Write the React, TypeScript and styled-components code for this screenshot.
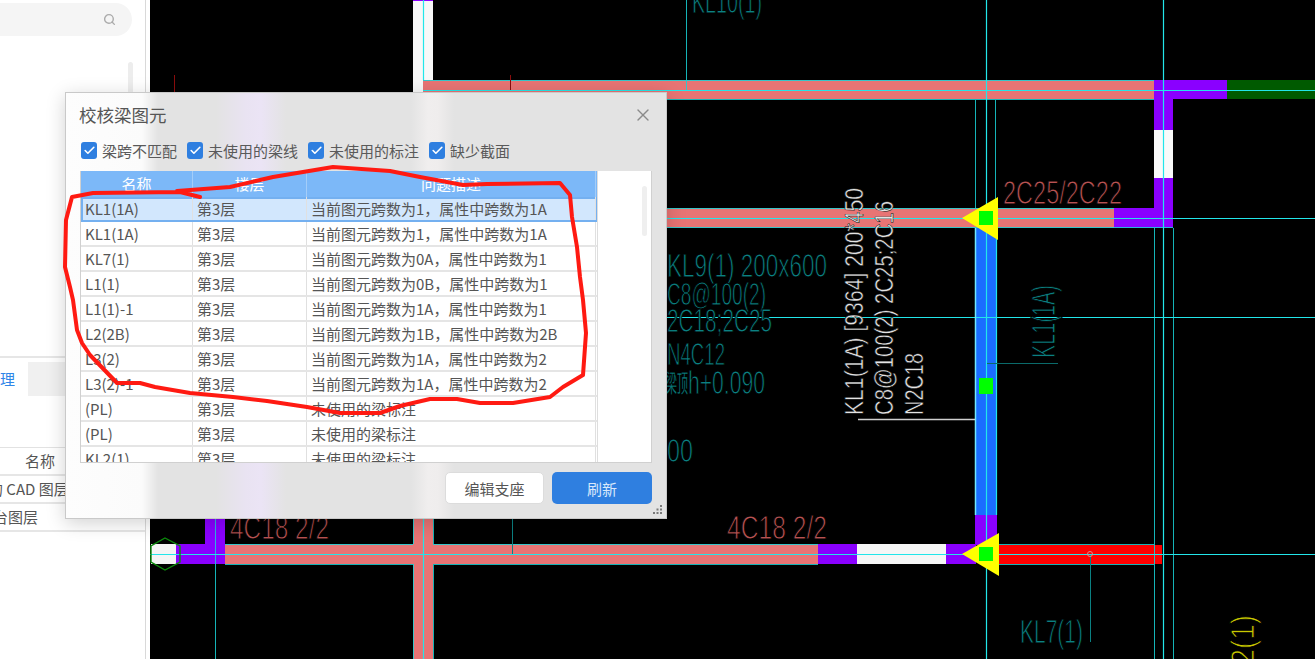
import React from "react";
import styled, { createGlobalStyle } from "styled-components";
import { Search, X, Check } from "lucide-react";

const FONT = `"Noto Sans CJK SC", "Noto Sans", sans-serif`;

const GlobalStyle = createGlobalStyle`
  html, body { margin: 0; padding: 0; background: #fff; }
  body { font-family: ${FONT}; }
`;

interface Row {
  name: string;
  floor: string;
  issue: string;
}

const rows: Row[] = [
  { name: "KL1(1A)", floor: "第3层", issue: "当前图元跨数为1，属性中跨数为1A" },
  { name: "KL1(1A)", floor: "第3层", issue: "当前图元跨数为1，属性中跨数为1A" },
  { name: "KL7(1)", floor: "第3层", issue: "当前图元跨数为0A，属性中跨数为1" },
  { name: "L1(1)", floor: "第3层", issue: "当前图元跨数为0B，属性中跨数为1" },
  { name: "L1(1)-1", floor: "第3层", issue: "当前图元跨数为1A，属性中跨数为1" },
  { name: "L2(2B)", floor: "第3层", issue: "当前图元跨数为1B，属性中跨数为2B" },
  { name: "L3(2)", floor: "第3层", issue: "当前图元跨数为1A，属性中跨数为2" },
  { name: "L3(2)-1", floor: "第3层", issue: "当前图元跨数为1A，属性中跨数为2" },
  { name: "(PL)", floor: "第3层", issue: "未使用的梁标注" },
  { name: "(PL)", floor: "第3层", issue: "未使用的梁标注" },
  { name: "KL2(1)", floor: "第3层", issue: "未使用的梁标注" },
];

const filters = ["梁跨不匹配", "未使用的梁线", "未使用的标注", "缺少截面"];

const scribble =
  "M200 197 L180 192 L93 193 L72 197 L66 220 L65 267 L70 287 L73 300 L77 330 L82 343 L90 355 L117 383 L140 383 L155 387 L190 393 L233 397 L267 401 L307 407 L340 413 L380 413 L400 406 L430 399 L457 399 L480 403 L513 403 L550 397 L563 387 L583 375 L586 333 L583 300 L580 277 L577 247 L572 217 L570 195 L560 183 L487 184 L463 185 L420 177 L390 171 L333 167 L273 177 L230 187 L177 191";

const PINK = "#e87474";
const PURPLE = "#8a00ff";
const CYAN = "#19d4d8";
const TEAL = "#0b8082";
const BRICK = "#b85252";

const CadDrawing = () => (
  <CadSvg viewBox="150 0 1165 659">
    {/* columns and beams */}
    <rect x={413} y={0} width={20} height={100} fill="#f8f8f8" />
    <rect x={413} y={0} width={20} height={1} fill={PURPLE} />
    <rect x={423} y={80} width={731} height={19} fill={PINK} />
    <rect x={1154} y={80} width={73} height={19} fill={PURPLE} />
    <rect x={1227} y={80} width={88} height={19} fill="#005a00" />
    <rect x={1154} y={99} width={19} height={31} fill={PURPLE} />
    <rect x={1154} y={130} width={19} height={48} fill="#fafafa" />
    <rect x={1154} y={178} width={19} height={30} fill={PURPLE} />
    <rect x={1114} y={208} width={59} height={20} fill={PURPLE} />
    <rect x={600} y={208} width={514} height={20} fill={PINK} />
    <rect x={975} y={228} width={22} height={287} fill="#1a6dff" />
    <rect x={975} y={515} width={22} height={30} fill={PURPLE} />
    <rect x={205} y={510} width={20} height={35} fill={PURPLE} />
    <rect x={176} y={544} width={49} height={20} fill={PURPLE} />
    <rect x={151} y={544} width={25} height={20} fill="#f4f4f4" />
    <rect x={225} y={544} width={593} height={20} fill={PINK} />
    <rect x={413} y={510} width={20} height={149} fill={PINK} />
    <rect x={818} y={544} width={39} height={20} fill={PURPLE} />
    <rect x={857} y={544} width={89} height={20} fill="#f6f6f6" />
    <rect x={946} y={544} width={30} height={20} fill={PURPLE} />
    <rect x={998} y={545} width={164} height={19} fill="#ff0000" />

    {/* outlines and axes */}
    <g stroke={CYAN} strokeWidth={1} fill="none" opacity={0.85}>
      <path d="M423 80.5H1154M423 99.5H1154M600 208.5H1114M600 227.5H1173" />
      <path d="M225 544.5H413M433 544.5H818M225 564.5H413M433 564.5H818" />
      <path d="M998 544.5H1154M998 564.5H1154" />
      <path d="M975.5 99V208M995.5 99V208" />
      <path d="M413.5 510V544M433.5 510V544M413.5 564V659M433.5 564V659" />
      <path d="M1154.5 228V659M1173.5 228V659" />
      <path d="M215.5 510V659M686.5 0V90" />
    </g>
    <g stroke="#22e6ea" strokeWidth={1.2} fill="none">
      <path d="M423 90.5H1315M600 218.5H1315M600 317.5H1315M150 554.5H1315" />
      <path d="M986.5 0V659M1163.5 0V659M423.5 0V80M423.5 510V659" />
      <path d="M996.5 228V515" />
    </g>
    <path d="M975.5 228V515" stroke="#6fe8ff" strokeWidth={1.5} />
    <path d="M987 363.5H1058" stroke="#0a6a6a" strokeWidth={1} />
    <path d="M858 419.5H975" stroke="#cfcfcf" strokeWidth={1.5} />
    <path d="M510.5 75V90M174.5 75V92" stroke="#8a0d0d" strokeWidth={1} />
    <path d="M512.5 510V554M1090.5 555V642" stroke={TEAL} strokeWidth={1} />
    <circle cx={1090} cy={554} r={2.5} fill="none" stroke="#e08a8a" strokeWidth={1} />
    <polygon
      points="165,538 180,546 180,562 165,570 151,562 151,546"
      fill="none"
      stroke="#0c8a0c"
      strokeWidth={1.4}
    />

    {/* supports */}
    <polygon points="962,218 998,197 998,240" fill="#ffff00" />
    <polygon points="962,554 999,533 999,576" fill="#ffff00" />
    <rect x={979} y={211} width={14} height={14} fill="#00ff00" />
    <rect x={979} y={378} width={14} height={16} fill="#00ff00" />
    <rect x={979} y={547} width={14} height={14} fill="#00ff00" />

    {/* annotations */}
    <CadText x={692} y={13} fontSize={33} fill={TEAL} textLength={70} lengthAdjust="spacingAndGlyphs">KL10(1)</CadText>
    <CadText x={667} y={277} fontSize={33} fill={TEAL} textLength={160} lengthAdjust="spacingAndGlyphs">KL9(1) 200x600</CadText>
    <CadText x={667} y={305} fontSize={31} fill={TEAL} textLength={99} lengthAdjust="spacingAndGlyphs">C8@100(2)</CadText>
    <CadText x={667} y={332} fontSize={33} fill={TEAL} textLength={105} lengthAdjust="spacingAndGlyphs">2C18;2C25</CadText>
    <CadText x={667} y={365} fontSize={32} fill={TEAL} textLength={58} lengthAdjust="spacingAndGlyphs">N4C12</CadText>
    <CadText x={666} y={392} fontSize={24} fill={TEAL} textLength={22} lengthAdjust="spacingAndGlyphs" $thin={0.3}>梁顶</CadText>
    <CadText x={688} y={394} fontSize={33} fill={TEAL} textLength={77} lengthAdjust="spacingAndGlyphs">h+0.090</CadText>
    <CadText x={654} y={462} fontSize={33} fill={TEAL} textLength={39} lengthAdjust="spacingAndGlyphs">400</CadText>
    <CadText x={1003} y={204} fontSize={33} fill={BRICK} textLength={119} lengthAdjust="spacingAndGlyphs">2C25/2C22</CadText>
    <CadText x={727} y={539} fontSize={33} fill={BRICK} textLength={100} lengthAdjust="spacingAndGlyphs">4C18 2/2</CadText>
    <CadText x={230} y={539} fontSize={33} fill={BRICK} textLength={99} lengthAdjust="spacingAndGlyphs">4C18 2/2</CadText>
    <CadText x={1020} y={643} fontSize={33} fill={TEAL} textLength={63} lengthAdjust="spacingAndGlyphs">KL7(1)</CadText>
    <CadText transform="translate(1055 358) rotate(-90)" fontSize={33} fill={TEAL} textLength={73} lengthAdjust="spacingAndGlyphs">KL1(1A)</CadText>
    <CadText transform="translate(863 415) rotate(-90)" fontSize={25} fill="#e4e4e4" textLength={227} lengthAdjust="spacingAndGlyphs" $thin={0.5}>KL1(1A) [9364] 200*450</CadText>
    <CadText transform="translate(893 415) rotate(-90)" fontSize={25} fill="#e4e4e4" textLength={214} lengthAdjust="spacingAndGlyphs" $thin={0.5}>C8@100(2) 2C25;2C16</CadText>
    <CadText transform="translate(923 415) rotate(-90)" fontSize={25} fill="#e4e4e4" textLength={62} lengthAdjust="spacingAndGlyphs" $thin={0.5}>N2C18</CadText>
    <CadText transform="translate(1254 680) rotate(-90)" fontSize={33} fill="#c9c900" textLength={65} lengthAdjust="spacingAndGlyphs">L2(1)</CadText>
  </CadSvg>
);

const App: React.FC = () => (
  <Page>
    <GlobalStyle />
    <Sidebar>
      <SearchPill>
        <Search size={13} strokeWidth={2.6} color="#ababab" />
      </SearchPill>
      <TreeArea>
        <TreeThumb />
      </TreeArea>
      <Tabs>
        <ActiveTab>管理</ActiveTab>
        <IdleTab />
      </Tabs>
      <LayerHeader>名称</LayerHeader>
      <LayerRow>
        <LayerName $shift={-12}>的 CAD 图层</LayerName>
      </LayerRow>
      <LayerRow>
        <LayerName $shift={-7}>台图层</LayerName>
      </LayerRow>
    </Sidebar>
    <Canvas>
      <CadDrawing />
    </Canvas>

    <Dialog>
      <TitleBar>
        <Title>校核梁图元</Title>
        <X size={20} strokeWidth={1.6} color="#8a8a8a" />
      </TitleBar>
      <Filters>
        {filters.map((label) => (
          <Filter key={label}>
            <CheckBox>
              <Check size={13} strokeWidth={3} color="#fff" />
            </CheckBox>
            {label}
          </Filter>
        ))}
      </Filters>
      <TableFrame>
        <TableColumn>
          <HeadRow>
            <HeadCell $w={112}>名称</HeadCell>
            <HeadCell $w={114}>楼层</HeadCell>
            <HeadCell $w={289}>问题描述</HeadCell>
          </HeadRow>
          {rows.map((row, i) => (
            <DataRow key={i} $selected={i === 0}>
              <DataCell $w={112}>{row.name}</DataCell>
              <DataCell $w={114}>{row.floor}</DataCell>
              <DataCell $w={289}>{row.issue}</DataCell>
            </DataRow>
          ))}
        </TableColumn>
        <ScrollRail>
          <ScrollThumb />
        </ScrollRail>
      </TableFrame>
      <Footer>
        <GhostButton>编辑支座</GhostButton>
        <PrimaryButton>刷新</PrimaryButton>
      </Footer>
      <Grip viewBox="0 0 10 10">
        <g fill="#7a7a7a">
          <rect x={7} y={0} width={2} height={2} />
          <rect x={3.5} y={3.5} width={2} height={2} />
          <rect x={7} y={3.5} width={2} height={2} />
          <rect x={0} y={7} width={2} height={2} />
          <rect x={3.5} y={7} width={2} height={2} />
          <rect x={7} y={7} width={2} height={2} />
        </g>
      </Grip>
    </Dialog>

    <Scribble viewBox="0 0 1315 659">
      <path
        d={scribble}
        fill="none"
        stroke="#ff1a12"
        strokeWidth={4}
        strokeLinejoin="round"
        strokeLinecap="round"
      />
    </Scribble>
  </Page>
);

export default App;

const Page = styled.div`
  position: relative;
  display: flex;
  width: 1315px;
  height: 659px;
  overflow: hidden;
  background: #fff;
`;

const Sidebar = styled.aside`
  width: 145px;
  margin-right: 4px;
  flex-shrink: 0;
  display: flex;
  flex-direction: column;
  border-right: 1px solid #d9d9d9;
  box-sizing: content-box;
  overflow: hidden;
  font-size: 15px;
  color: #555;
`;

const SearchPill = styled.div`
  width: 152px;
  height: 33px;
  margin: 3px 0 0 -20px;
  padding-right: 16px;
  box-sizing: border-box;
  flex-shrink: 0;
  display: flex;
  align-items: center;
  justify-content: flex-end;
  background: #f5f5f5;
  border-radius: 17px;
`;

const TreeArea = styled.div`
  height: 322px;
  flex-shrink: 0;
  padding: 26px 0 0 128px;
  box-sizing: border-box;
  border-bottom: 2px solid #e6e6e6;
`;

const TreeThumb = styled.div`
  width: 5px;
  height: 60px;
  border-radius: 3px;
  background: #ededed;
`;

const Tabs = styled.div`
  display: flex;
  height: 39px;
  padding-top: 4px;
  flex-shrink: 0;
`;

const ActiveTab = styled.div`
  width: 28px;
  height: 34px;
  margin-left: -15px;
  line-height: 34px;
  color: #2f86e8;
  white-space: nowrap;
`;

const IdleTab = styled.div`
  width: 80px;
  height: 34px;
  margin-left: 15px;
  background: #f0f0f0;
`;

const LayerHeader = styled.div`
  height: 26px;
  margin-top: 46px;
  padding-left: 25px;
  line-height: 26px;
  flex-shrink: 0;
  border-top: 1px solid #e2e2e2;
`;

const LayerRow = styled.div`
  height: 26px;
  line-height: 26px;
  flex-shrink: 0;
  border-top: 2px solid #e6e6e6;
  overflow: hidden;
  white-space: nowrap;
  &:last-child {
    border-bottom: 2px solid #e6e6e6;
  }
`;

const LayerName = styled.div<{ $shift: number }>`
  margin-left: ${(p) => p.$shift}px;
`;

const Canvas = styled.main`
  flex: 1;
  background: #000;
  overflow: hidden;
`;

const CadSvg = styled.svg`
  display: block;
  width: 100%;
  height: 100%;
`;

// a black stroke over the fill eats into the glyphs, giving the thin CAD lettering
const CadText = styled.text<{ $thin?: number }>`
  font-family: "Liberation Sans", "Noto Sans CJK SC", sans-serif;
  stroke: #000;
  stroke-width: ${(p) => p.$thin ?? 1}px;
`;

const Dialog = styled.section`
  position: absolute;
  left: 65px;
  top: 92px;
  width: 602px;
  height: 427px;
  box-sizing: border-box;
  padding: 0 14px 0 13px;
  display: flex;
  flex-direction: column;
  border: 1px solid #c9c9c9;
  box-shadow: 0 4px 18px rgba(0, 0, 0, 0.18);
  background: linear-gradient(
    90deg,
    #fdfdfd 0,
    #fbfbfb 76px,
    #e3e3e3 92px,
    #e3e3e3 150px,
    #e9e3f2 180px,
    #ebe4f5 195px,
    #e3e3e3 220px,
    #e3e3e3 345px,
    #f0eeee 362px,
    #efeded 372px,
    #e3e3e3 388px,
    #e3e3e3 100%
  );
`;

const TitleBar = styled.header`
  height: 46px;
  padding-bottom: 3px;
  margin-right: -1px;
  box-sizing: border-box;
  flex-shrink: 0;
  display: flex;
  align-items: center;
  justify-content: space-between;
`;

const Title = styled.h2`
  margin: 0;
  font-size: 17.5px;
  font-weight: 400;
  color: #565656;
`;

const Filters = styled.div`
  height: 22px;
  padding-left: 2px;
  flex-shrink: 0;
  display: flex;
  align-items: center;
  gap: 10px;
`;

const Filter = styled.label`
  display: flex;
  align-items: center;
  gap: 5px;
  font-size: 15px;
  color: #5a5a5a;
  white-space: nowrap;
`;

const CheckBox = styled.span`
  width: 16px;
  height: 17px;
  border-radius: 3px;
  background: #2f7fe0;
  display: flex;
  align-items: center;
  justify-content: center;
`;

const TableFrame = styled.div`
  height: 292px;
  margin: 10px 0 0 1px;
  flex-shrink: 0;
  display: flex;
  box-sizing: border-box;
  background: #fff;
  border: 1px solid #d0d0d0;
  border-top-width: 0;
  overflow: hidden;
`;

const TableColumn = styled.div`
  width: 516px;
  flex-shrink: 0;
  border-right: 1px solid #dedede;
`;

const HeadRow = styled.div`
  display: flex;
  height: 26px;
  background: #7cb8f8;
`;

const HeadCell = styled.div<{ $w: number }>`
  width: ${(p) => p.$w}px;
  flex-shrink: 0;
  box-sizing: border-box;
  text-align: center;
  line-height: 26px;
  font-size: 15px;
  color: #fff;
  border-right: 1px solid #a3cdf9;
`;

const DataRow = styled.div<{ $selected?: boolean }>`
  display: flex;
  height: 25px;
  box-sizing: border-box;
  background: ${(p) => (p.$selected ? "#d2e7fd" : "#fff")};
  border-bottom: 2px solid ${(p) => (p.$selected ? "#74b0f0" : "#e5e5e5")};
  box-shadow: ${(p) => (p.$selected ? "inset 0 2px 0 #74b0f0, inset 2px 0 0 #74b0f0, inset -2px 0 0 #74b0f0" : "none")};
`;

const DataCell = styled.div<{ $w: number }>`
  width: ${(p) => p.$w}px;
  flex-shrink: 0;
  box-sizing: border-box;
  padding-left: 4px;
  line-height: 23px;
  font-size: 15px;
  color: #555;
  white-space: nowrap;
  border-right: 1px solid #e0e0e0;
`;

const ScrollRail = styled.div`
  flex: 1;
  padding: 15px 0 0 44px;
`;

const ScrollThumb = styled.div`
  width: 5px;
  height: 50px;
  border-radius: 3px;
  background: #efefef;
`;

const Footer = styled.footer`
  margin-top: 9px;
  display: flex;
  justify-content: flex-end;
  gap: 8px;
`;

const GhostButton = styled.button`
  width: 99px;
  height: 32px;
  padding: 0;
  font-family: ${FONT};
  font-size: 15px;
  color: #555;
  background: #fff;
  border: 1px solid #dcdcdc;
  border-radius: 5px;
`;

const PrimaryButton = styled.button`
  width: 100px;
  height: 32px;
  padding: 0;
  font-family: ${FONT};
  font-size: 15px;
  color: #d8e8fb;
  background: #2f7fe0;
  border: none;
  border-radius: 5px;
`;

const Grip = styled.svg`
  position: absolute;
  right: 3px;
  bottom: 3px;
  width: 10px;
  height: 10px;
`;

const Scribble = styled.svg`
  position: absolute;
  left: 0;
  top: 0;
  width: 1315px;
  height: 659px;
  pointer-events: none;
`;
